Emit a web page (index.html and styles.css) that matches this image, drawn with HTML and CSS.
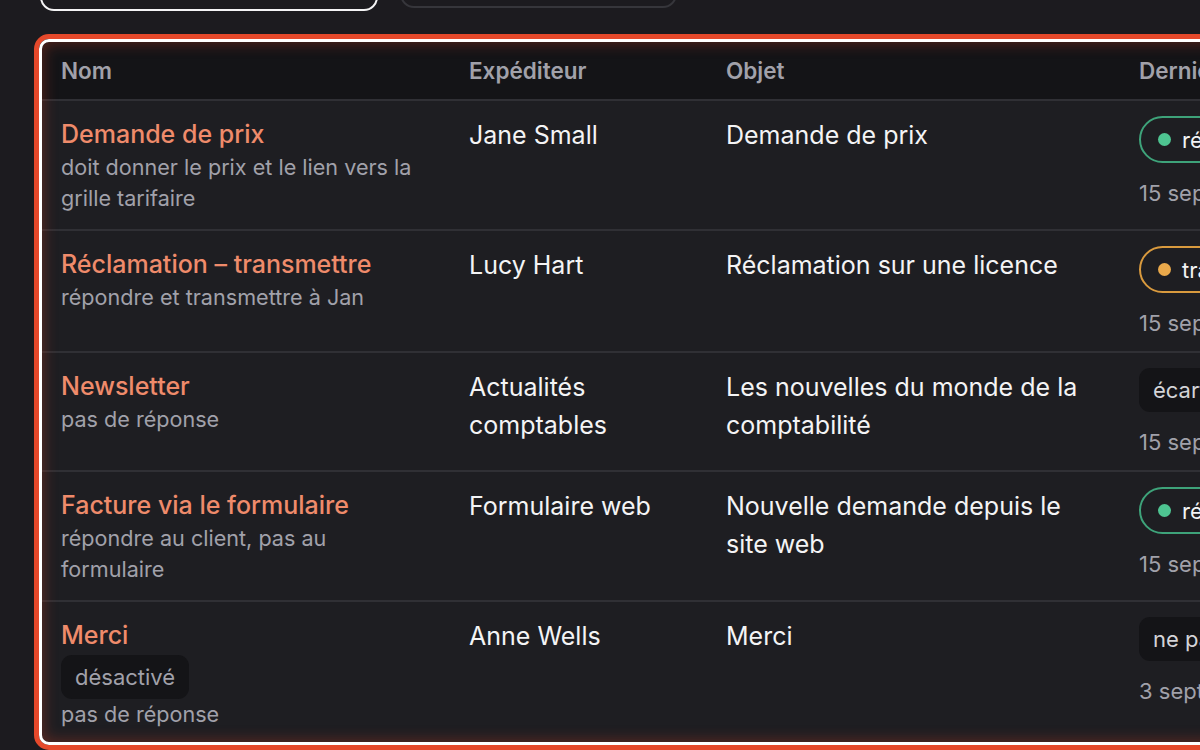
FILE: index.html
```html
<!DOCTYPE html>
<html lang="fr">

<head>
    <meta charset="UTF-8">
    <meta name="viewport" content="width=device-width, initial-scale=1.0">
    <title>Règles</title>
<link rel="stylesheet" href="styles.css">
</head>

<body>
    <div class="toolbar">
        <button class="tool active"></button>
        <button class="tool"></button>
    </div>

    <div class="frame">
        <table class="rules">
            <colgroup>
                <col class="c-name">
                <col class="c-from">
                <col class="c-subject">
                <col class="c-last">
            </colgroup>
            <thead>
                <tr>
                    <th>Nom</th>
                    <th>Expéditeur</th>
                    <th>Objet</th>
                    <th>Dernier envoi</th>
                </tr>
            </thead>
            <tbody>
                <tr>
                    <td>
                        <div class="title">Demande de prix</div>
                        <div class="desc">doit donner le prix et le lien vers la grille tarifaire</div>
                    </td>
                    <td>Jane Small</td>
                    <td>Demande de prix</td>
                    <td>
                        <span class="status ok"><i class="dot"></i>répondu</span>
                        <div class="date">15 sept. 2024</div>
                    </td>
                </tr>
                <tr>
                    <td>
                        <div class="title">Réclamation – transmettre</div>
                        <div class="desc">répondre et transmettre à Jan</div>
                    </td>
                    <td>Lucy Hart</td>
                    <td>Réclamation sur une licence</td>
                    <td>
                        <span class="status fwd"><i class="dot"></i>transmis</span>
                        <div class="date">15 sept. 2024</div>
                    </td>
                </tr>
                <tr>
                    <td>
                        <div class="title">Newsletter</div>
                        <div class="desc">pas de réponse</div>
                    </td>
                    <td>Actualités comptables</td>
                    <td>Les nouvelles du monde de la comptabilité</td>
                    <td>
                        <span class="tag">écarté</span>
                        <div class="date">15 sept. 2024</div>
                    </td>
                </tr>
                <tr>
                    <td>
                        <div class="title">Facture via le formulaire</div>
                        <div class="desc">répondre au client, pas au formulaire</div>
                    </td>
                    <td>Formulaire web</td>
                    <td>Nouvelle demande depuis le site web</td>
                    <td>
                        <span class="status ok"><i class="dot"></i>répondu</span>
                        <div class="date">15 sept. 2024</div>
                    </td>
                </tr>
                <tr>
                    <td>
                        <div class="title">Merci</div>
                        <span class="tag">désactivé</span>
                        <div class="desc">pas de réponse</div>
                    </td>
                    <td>Anne Wells</td>
                    <td>Merci</td>
                    <td>
                        <span class="tag">ne pas répondre</span>
                        <div class="date">3 sept. 2024</div>
                    </td>
                </tr>
            </tbody>
        </table>
    </div>
</body>

</html>
```

FILE: styles.css
```css
* {
    margin: 0;
    padding: 0;
    box-sizing: border-box;
}

body {
    background-color: #1c1b1f;
    width: 100vw;
    height: 100vh;
    overflow: hidden;
    font-family: Inter, "Noto Sans", sans-serif;
    color: #f4f4f5;
}

.toolbar {
    display: flex;
    gap: 22px;
    margin-top: -40px;
    padding-left: 40px;
    height: 51px;
}

.tool {
    width: 338px;
    height: 51px;
    background: transparent;
    border: 2px solid #f4f4f5;
    border-radius: 14px;
}

.tool:not(.active) {
    width: 277px;
    height: 48px;
    border-color: #36363b;
}

.frame {
    position: relative;
    margin: 23px 0 0 34px;
    width: 1500px;
    border: 5px solid #e5492b;
    border-radius: 15px;
    background-color: #e5492b;
}

/* white focus ring + soft red glow over the table edges */
.frame::after {
    content: "";
    position: absolute;
    inset: 0;
    border: 3px solid #fff;
    border-radius: 10px;
    box-shadow: inset 0 0 14px 2px rgba(200, 60, 35, 0.35);
    pointer-events: none;
}

.rules {
    width: 100%;
    table-layout: fixed;
    border-collapse: collapse;
    background-color: #1e1e22;
    border-radius: 10px;
    overflow: hidden;
}

.c-name { width: 411px; }
.c-from { width: 257px; }
.c-subject { width: 413px; }
.c-last { width: 419px; }

th {
    text-align: left;
    font-size: 22.5px;
    font-weight: 600;
    color: #a1a1aa;
    background-color: #141417;
    height: 61px;
    padding: 0 19px;
    padding-top: 2px;
    white-space: nowrap;
}

th:first-child,
td:first-child {
    padding-left: 22px;
}

td {
    vertical-align: top;
    padding: 15px 19px;
    font-size: 25px;
    line-height: 38px;
    border-top: 2px solid #303035;
}

.title {
    color: #ef8b6b;
    font-weight: 500;
    line-height: 36px;
}

.desc {
    color: #a1a1aa;
    font-size: 21.6px;
    line-height: 31px;
}

.status {
    display: inline-flex;
    align-items: center;
    gap: 11px;
    height: 47px;
    padding: 0 18px 0 17px;
    border: 2px solid;
    border-radius: 24px;
    font-size: 22px;
    white-space: nowrap;
    vertical-align: top;
}

.status.ok { border-color: #3ea37a; }
.status.ok .dot { background-color: #4ec491; }
.status.fwd { border-color: #d99a3e; }
.status.fwd .dot { background-color: #eaa94b; }

.dot {
    width: 13px;
    height: 13px;
    border-radius: 50%;
}

.tag {
    display: inline-block;
    height: 44px;
    padding: 0 14px;
    line-height: 44px;
    border-radius: 11px;
    background-color: #141417;
    color: #d4d4d8;
    font-size: 22px;
    white-space: nowrap;
    vertical-align: top;
}

td:first-child .tag {
    color: #a1a1aa;
    margin: 2px 0 0;
}

.date {
    margin-top: 17px;
    color: #a1a1aa;
    font-size: 22px;
    line-height: 26px;
    white-space: nowrap;
}
```
